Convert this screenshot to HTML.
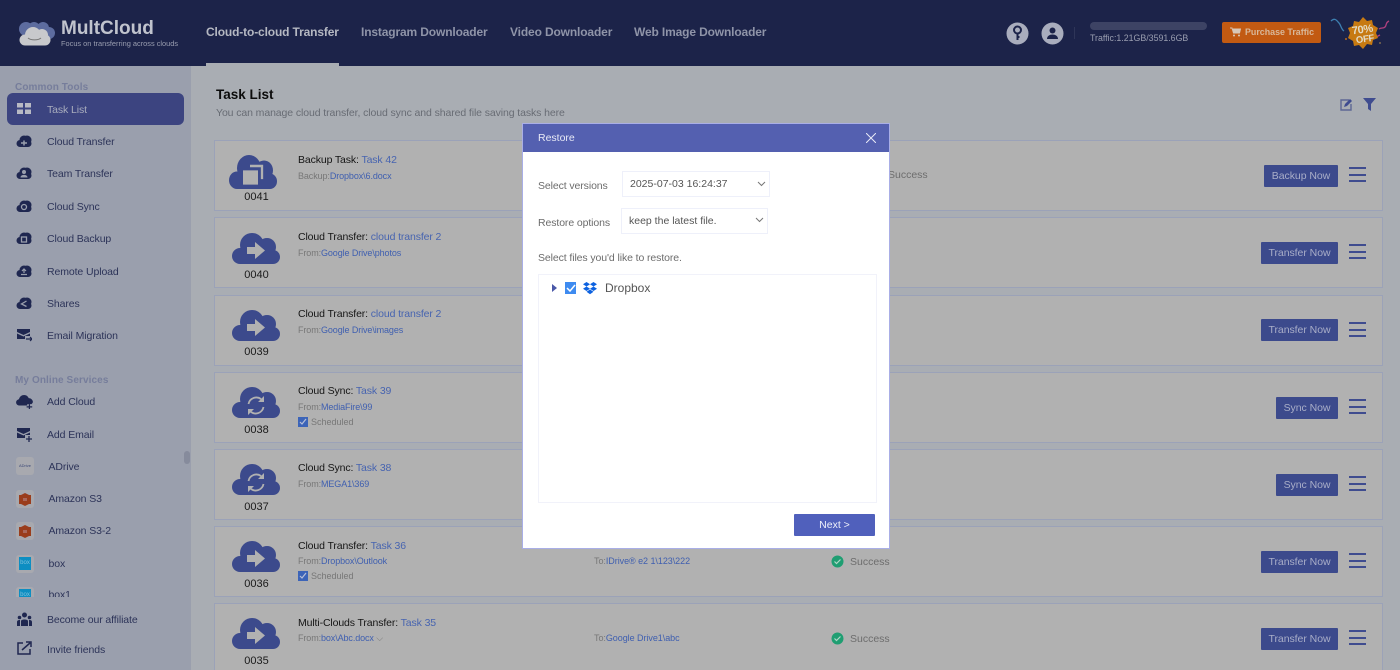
<!DOCTYPE html>
<html><head><meta charset="utf-8"><style>
*{box-sizing:border-box}
html,body{margin:0;padding:0;width:1400px;height:670px;overflow:hidden}
#w{position:relative;width:1400px;height:670px;overflow:hidden;background:#a9adb3;font-family:"Liberation Sans",sans-serif;font-size:10.5px}
.a{position:absolute;white-space:nowrap}
.hd{position:absolute;left:0;top:0;width:1400px;height:66px;background:#1c2349}
.nav{position:absolute;top:25px;font-size:12px;letter-spacing:-.14px;font-weight:bold;color:#8f94a8;white-space:nowrap;line-height:15px}
.side{position:absolute;left:0;top:66px;width:191px;height:604px;background:#9a9fad}
.si{position:absolute;left:47px;font-size:10.5px;letter-spacing:-.1px;color:#2c3358;line-height:14px;white-space:nowrap}
.sec{position:absolute;left:15px;font-size:10px;letter-spacing:.1px;font-weight:bold;color:#767d9b;line-height:12px;white-space:nowrap}
.ic{position:absolute;left:16px}
.lg{position:absolute;left:16px;width:18px;height:18px;background:#a8a9af;border-radius:3px}
.card{position:absolute;left:214px;width:1169px;height:71px;background:#b1b1b1;border:1px solid #9ba2b8}
.t{position:absolute;left:83px;top:12px;font-size:10.5px;letter-spacing:-.12px;color:#151515;white-space:nowrap;line-height:14px}
.t b{font-weight:normal;color:#4764b0}
.s{position:absolute;left:83px;top:29px;font-size:9px;letter-spacing:-.1px;color:#777;white-space:nowrap;line-height:12px}
.s b{font-weight:normal;color:#3f5fb0}
.sch{position:absolute;left:83px;top:43px;font-size:9px;color:#777;line-height:12px;padding-left:13px;white-space:nowrap}
.sch i{position:absolute;left:0;top:1px;width:10px;height:10px;background:#3c64b8}
.n{position:absolute;left:0;width:83px;text-align:center;top:51px;font-size:11px;color:#1a1a1a;line-height:13px}
.cl{position:absolute}
.btn{position:absolute;top:24px;height:22px;background:#3c4a8c;color:#a9aec8;font-size:10.5px;letter-spacing:-.05px;line-height:22px;text-align:center;border-radius:1px}
.ham{position:absolute;left:1134px;top:26px;width:17px;height:15px;border-top:2px solid #3f4c8f;border-bottom:2px solid #3f4c8f}
.ham:after{content:"";position:absolute;left:0;right:0;top:4.500px;height:2px;background:#3f4c8f}
.to{position:absolute;left:379px;top:28px;font-size:9px;letter-spacing:-.05px;color:#777;white-space:nowrap;line-height:12px}
.to b{font-weight:normal;color:#3f5fb0}
.ok{position:absolute;left:616px;top:28px;font-size:10.5px;color:#6d6d6d;padding-left:19px;line-height:14px;white-space:nowrap}
.ok svg{position:absolute;left:0;top:0}
.modal{position:absolute;left:522px;top:123px;width:368px;height:426px;background:#fff;border:1px solid #a9aee6}
.mh{position:absolute;left:0;top:0;width:366px;height:28px;background:#5460b0;color:#e8eaf6;font-size:10.5px;line-height:28px;padding-left:15px}
.sel{position:absolute;height:26px;background:#fff;border:1px solid #eef0fa;font-size:10.5px;color:#555;line-height:24px;padding-left:7px;white-space:nowrap}
.lb{position:absolute;left:15px;font-size:10.5px;letter-spacing:-.1px;color:#6c6c6c;line-height:14px;white-space:nowrap}
</style></head><body><div id="w">
<svg width="0" height="0" style="position:absolute"><defs>
<g id="c"><circle cx="8" cy="23" r="8"/><circle cx="20" cy="12" r="12"/><circle cx="35" cy="14" r="9"/><circle cx="41" cy="24" r="7"/><rect x="8" y="16" width="33" height="15"/></g>
<g id="sc"><circle cx="4" cy="8.500" r="3.500"/><circle cx="8" cy="5" r="4.500"/><circle cx="11" cy="5" r="4.500"/><circle cx="12" cy="8.500" r="3.500"/><rect x="4" y="6" width="8" height="6"/></g>
<g id="arr"><use href="#c" fill="#3c4a8c"/><path d="M15 14h8V9l10 8.500-10 8.500v-5h-8z" fill="#b1b1b1"/></g>
<g id="syn"><use href="#c" fill="#3c4a8c"/><path d="M16.500 17a8 8 0 0 1 12.500-5M31.500 20a8 8 0 0 1-12.500 5" fill="none" stroke="#b1b1b1" stroke-width="1.800"/><path d="M32 9v6h-6zM16 28v-6h6z" fill="#b1b1b1"/></g>
</defs></svg>

<div class="hd"></div>
<svg class="a" style="left:18px;top:21px" width="38" height="25" viewBox="0 0 38 25"><g fill="#5d6c9f"><circle cx="8" cy="8" r="7"/><circle cx="16" cy="7" r="6"/><circle cx="25" cy="7" r="6"/><circle cx="31" cy="12" r="6"/></g><g fill="#c8c9cc"><circle cx="7" cy="19" r="5.500"/><circle cx="15" cy="14" r="8"/><circle cx="24" cy="14" r="6"/><circle cx="27" cy="19" r="5.500"/><rect x="7" y="16" width="20" height="8.500"/></g><path d="M10 17c3 2.500 10 2.500 13 0" stroke="#777" fill="none"/></svg>
<div class="a" style="left:61px;top:19px;font-size:19px;font-weight:bold;color:#c0c3cd;line-height:20px">MultCloud</div>
<div class="a" style="left:61px;top:39px;font-size:7.400px;color:#9a9eb0;line-height:9px">Focus on transferring across clouds</div>
<div class="nav" style="left:206px;color:#b5b8c2">Cloud-to-cloud Transfer</div>
<div class="a" style="left:206px;top:63px;width:133px;height:3px;background:#a9adb3"></div>
<div class="nav" style="left:361px">Instagram Downloader</div>
<div class="nav" style="left:510px">Video Downloader</div>
<div class="nav" style="left:634px">Web Image Downloader</div>

<svg class="a" style="left:1006px;top:22px" width="23" height="23" viewBox="0 0 23 23"><circle cx="11.500" cy="11.500" r="11" fill="#a9adbd"/><circle cx="11.500" cy="8" r="3.500" fill="none" stroke="#1c2349" stroke-width="2"/><path d="M11.500 11v7M11.500 15h2" stroke="#1c2349" stroke-width="2"/></svg>
<svg class="a" style="left:1041px;top:22px" width="23" height="23" viewBox="0 0 23 23"><circle cx="11.500" cy="11.500" r="11" fill="#a9adbd"/><circle cx="11.500" cy="8.500" r="3" fill="#1c2349"/><path d="M6 17c0-6 11-6 11 0z" fill="#1c2349"/></svg>
<div class="a" style="left:1074px;top:27px;width:1px;height:12px;background:#2e3558"></div>
<div class="a" style="left:1090px;top:22px;width:117px;height:8px;background:#3d4364;border-radius:4px"></div>
<div class="a" style="left:1090px;top:32px;font-size:8.800px;color:#9a9eb0;line-height:12px">Traffic:1.21GB/3591.6GB</div>
<div class="a" style="left:1222px;top:22px;width:99px;height:21px;background:#c25a12;border-radius:2px;color:#d8b89a;font-size:8.900px;font-weight:bold;line-height:21px;padding-left:23px">Purchase Traffic</div>
<svg class="a" style="left:1230px;top:27px" width="11" height="10" viewBox="0 0 11 10"><path d="M0 1h2l1.500 5h6l1-4H3" fill="#d8c8b8" stroke="#d8c8b8"/><circle cx="4" cy="8.500" r="1" fill="#d8c8b8"/><circle cx="9" cy="8.500" r="1" fill="#d8c8b8"/></svg>
<svg class="a" style="left:1330px;top:15px" width="62" height="36" viewBox="0 0 62 36"><path d="M1 6c4-4 6 0 8 2s2 6 5 8" stroke="#3d7fb0" fill="none" stroke-width="1.300"/><path d="M49 14c3-2 4 0 6-2s0-4 4-6M46 22l4-2" stroke="#b0407f" fill="none" stroke-width="1.300"/><path d="M33 2l4 4 5-1 1 5 5 3-2 5 2 5-5 2-1 5-5-1-4 5-4-4-5 1-1-5-5-3 2-5-2-5 5-2 1-5 5 1z" fill="#c77a12"/><circle cx="16" cy="24" r="1" fill="#b86b20"/><circle cx="50" cy="28" r="1" fill="#7a6a50"/></svg>
<div class="a" style="left:1352px;top:24px;font-size:11px;font-weight:bold;color:#e3dcc8;line-height:12px;letter-spacing:-.4px;transform:rotate(-8deg)">70%</div>
<div class="a" style="left:1356px;top:34px;font-size:9.500px;font-weight:bold;color:#e3dcc8;line-height:11px;letter-spacing:-.3px;transform:rotate(-8deg)">OFF</div>

<div class="side"></div>
<div class="sec" style="top:82px">Common Tools</div>
<div class="a" style="left:7px;top:93px;width:177px;height:32px;background:#3c4480;border-radius:6px"></div>
<svg class="a" style="left:17px;top:103px" width="14" height="11"><rect width="6" height="4.500" fill="#b8bac4"/><rect x="8" width="6" height="4.500" fill="#b8bac4"/><rect y="6.500" width="6" height="4.500" fill="#b8bac4"/><rect x="8" y="6.500" width="6" height="4.500" fill="#b8bac4"/></svg>
<div class="si" style="top:103px;color:#a9adbd">Task List</div>

<svg class="ic" style="top:135px" width="16" height="12"><use href="#sc" fill="#1f2750"/><path d="M5 8h6M8 5.500v5" stroke="#9a9fad" stroke-width="1.500"/></svg><div class="si" style="top:135px">Cloud Transfer</div>
<svg class="ic" style="top:167px" width="16" height="12"><use href="#sc" fill="#1f2750"/><circle cx="8" cy="5" r="2" fill="#9a9fad"/><path d="M4.500 10.500c0-3.500 7-3.500 7 0z" fill="#9a9fad"/></svg><div class="si" style="top:167px">Team Transfer</div>
<svg class="ic" style="top:200px" width="16" height="12"><use href="#sc" fill="#1f2750"/><circle cx="8" cy="7" r="2.500" fill="none" stroke="#9a9fad" stroke-width="1.300"/></svg><div class="si" style="top:200px">Cloud Sync</div>
<svg class="ic" style="top:232px" width="16" height="12"><use href="#sc" fill="#1f2750"/><rect x="5.500" y="5" width="5" height="5" fill="none" stroke="#9a9fad" stroke-width="1.300"/></svg><div class="si" style="top:232px">Cloud Backup</div>
<svg class="ic" style="top:265px" width="16" height="12"><use href="#sc" fill="#1f2750"/><path d="M5 9.500h6M8 8V4M6 6l2-2 2 2" stroke="#9a9fad" stroke-width="1.200" fill="none"/></svg><div class="si" style="top:265px">Remote Upload</div>
<svg class="ic" style="top:297px" width="16" height="12"><use href="#sc" fill="#1f2750"/><path d="M10.500 4L5.500 7l5 2.500" stroke="#9a9fad" stroke-width="1.300" fill="none"/></svg><div class="si" style="top:297px">Shares</div>
<svg class="ic" style="left:17px;top:329px" width="15" height="13" viewBox="0 0 15 13"><path d="M0 0h13v3L6.500 6 0 3zM0 4.500L6.500 7.500 13 4.500V7H8v3H0z" fill="#1f2750"/><path d="M9 10h6M13 8l2 2-2 2" stroke="#1f2750" stroke-width="1.200" fill="none"/></svg><div class="si" style="top:329px">Email Migration</div>

<div class="sec" style="top:375px">My Online Services</div>
<svg class="ic" style="top:395px" width="17" height="14" viewBox="0 0 24 20"><path d="M5 15C2 15 0 13 0 10.500C0 8 2 6.500 4 6C5 2.500 8 0 11.500 0C14.500 0 17 2 18 4.500C21 4.500 24 7 24 10C24 11 23 12 22 13H16V15Z" fill="#1f2750"/><path d="M15 17h8M19 13v8" stroke="#1f2750" stroke-width="1.800"/></svg><div class="si" style="top:395px">Add Cloud</div>
<svg class="ic" style="left:17px;top:428px" width="15" height="14" viewBox="0 0 15 14"><path d="M0 0h13v3L6.500 6 0 3zM0 4.500L6.500 7.500 13 4.500V7H8v3H0z" fill="#1f2750"/><path d="M9 11h6M12 8v6" stroke="#1f2750" stroke-width="1.300"/></svg><div class="si" style="top:428px">Add Email</div>

<div style="position:absolute;left:0;top:450px;width:191px;height:147px;overflow:hidden">
<div class="lg" style="top:7px"></div><div class="a" style="left:19px;top:13px;font-size:4px;color:#3d4a78;line-height:6px">ADrive</div><div class="si" style="left:48.500px;top:10px">ADrive</div>
<div class="lg" style="top:40px"></div><svg class="a" style="left:19px;top:43px" width="12" height="13" viewBox="0 0 12 13"><path d="M2 2l4-2 4 2 2 0v9l-2 0-4 2-4-2-2 0V2z" fill="#9a3d1c"/><path d="M4 5h4v3H4z" fill="#a9695c"/></svg><div class="si" style="left:48.500px;top:42px">Amazon S3</div>
<div class="lg" style="top:72px"></div><svg class="a" style="left:19px;top:75px" width="12" height="13" viewBox="0 0 12 13"><path d="M2 2l4-2 4 2 2 0v9l-2 0-4 2-4-2-2 0V2z" fill="#9a3d1c"/><path d="M4 5h4v3H4z" fill="#a9695c"/></svg><div class="si" style="left:48.500px;top:74px">Amazon S3-2</div>
<div class="lg" style="top:105px"></div><div class="a" style="left:19px;top:107px;width:12px;height:13px;background:#0d8ec2;color:#7fc0dc;font-size:6px;line-height:13px;text-align:center">box</div><div class="si" style="left:48.500px;top:107px">box</div>
<div class="lg" style="top:137px"></div><div class="a" style="left:19px;top:139px;width:12px;height:13px;background:#0d8ec2;color:#7fc0dc;font-size:6px;line-height:13px;text-align:center">box</div><div class="si" style="left:48.500px;top:138px">box1</div>
</div>
<div class="a" style="left:184px;top:451px;width:6px;height:13px;background:#868b9c;border-radius:3px"></div>

<svg class="ic" style="left:17px;top:612px" width="15" height="14" viewBox="0 0 15 14"><circle cx="7.500" cy="3" r="2.500" fill="#1f2750"/><circle cx="2.500" cy="5.500" r="1.800" fill="#1f2750"/><circle cx="12.500" cy="5.500" r="1.800" fill="#1f2750"/><path d="M4 14V9c0-2 7-2 7 0v5zM0 14V10c0-2 2-2 3-2v6zM15 14V10c0-2-2-2-3-2v6z" fill="#1f2750"/></svg><div class="si" style="top:613px">Become our affiliate</div>
<svg class="ic" style="left:17px;top:641px" width="15" height="14" viewBox="0 0 15 14"><path d="M6 2H1v11h12V8" fill="none" stroke="#1f2750" stroke-width="1.500"/><path d="M5 9L13 2M9 1h5v5" fill="none" stroke="#1f2750" stroke-width="1.500"/></svg><div class="si" style="top:643px">Invite friends</div>

<div class="a" style="left:216px;top:87px;font-size:13.500px;font-weight:bold;color:#0c0c0c;line-height:16px">Task List</div>
<div class="a" style="left:216px;top:106px;font-size:10.500px;letter-spacing:-.1px;color:#686c74;line-height:14px">You can manage cloud transfer, cloud sync and shared file saving tasks here</div>
<svg class="a" style="left:1340px;top:98px" width="13" height="13" viewBox="0 0 13 13"><path d="M9 2H1v10h10V6" fill="none" stroke="#5d6794" stroke-width="1.400"/><path d="M4 9l1-3 5-5 2 2-5 5z" fill="#3f4c8f"/></svg>
<svg class="a" style="left:1363px;top:98px" width="14" height="13" viewBox="0 0 14 13"><path d="M0 0h13L8 6v7L5 11V6z" fill="#3f4c8f"/></svg>

<div class="card" style="top:140px"><svg class="cl" style="left:14px;top:14px" width="48" height="34" viewBox="0 0 48 31" preserveAspectRatio="none"><use href="#c" fill="#3c4a8c"/><rect x="14" y="14" width="15" height="13" fill="#b1b1b1"/><path d="M21 10h12v12" fill="none" stroke="#b1b1b1" stroke-width="2.300"/></svg><div class="n" style="top:50px">0041</div><div class="t">Backup Task: <b>Task 42</b></div><div class="s">Backup:<b>Dropbox\6.docx</b></div><div class="a" style="left:673px;top:27px;font-size:10.500px;color:#6d6d6d;line-height:14px">Success</div><div class="btn" style="left:1049px;width:74px">Backup Now</div><div class="ham"></div></div>

<div class="card" style="top:217px"><svg class="cl" style="left:17px;top:15px" width="48" height="31" viewBox="0 0 48 31"><use href="#arr"/></svg><div class="n">0040</div><div class="t">Cloud Transfer: <b>cloud transfer 2</b></div><div class="s">From:<b>Google Drive\photos</b></div><div class="btn" style="left:1046px;width:77px">Transfer Now</div><div class="ham"></div></div>

<div class="card" style="top:295px"><svg class="cl" style="left:17px;top:14px" width="48" height="31" viewBox="0 0 48 31"><use href="#arr"/></svg><div class="n" style="top:50px">0039</div><div class="t" style="top:11px">Cloud Transfer: <b>cloud transfer 2</b></div><div class="s" style="top:28px">From:<b>Google Drive\images</b></div><div class="btn" style="left:1046px;width:77px;top:23px">Transfer Now</div><div class="ham"></div></div>

<div class="card" style="top:372px"><svg class="cl" style="left:17px;top:14px" width="48" height="31" viewBox="0 0 48 31"><use href="#syn"/></svg><div class="n">0038</div><div class="t" style="top:11px">Cloud Sync: <b>Task 39</b></div><div class="s" style="top:28px">From:<b>MediaFire\99</b></div><div class="sch"><i></i>Scheduled<svg class="a" style="left:1px;top:2px" width="8" height="8"><path d="M1 4l2 2 4-5" stroke="#b8c0d8" stroke-width="1.200" fill="none"/></svg></div><div class="btn" style="left:1061px;width:62px">Sync Now</div><div class="ham"></div></div>

<div class="card" style="top:449px"><svg class="cl" style="left:17px;top:14px" width="48" height="31" viewBox="0 0 48 31"><use href="#syn"/></svg><div class="n">0037</div><div class="t" style="top:11px">Cloud Sync: <b>Task 38</b></div><div class="s" style="top:28px">From:<b>MEGA1\369</b></div><div class="btn" style="left:1061px;width:62px">Sync Now</div><div class="ham"></div></div>

<div class="card" style="top:526px"><svg class="cl" style="left:17px;top:14px" width="48" height="31" viewBox="0 0 48 31"><use href="#arr"/></svg><div class="n">0036</div><div class="t">Cloud Transfer: <b>Task 36</b></div><div class="s" style="top:28px">From:<b>Dropbox\Outlook</b></div><div class="sch"><i></i>Scheduled<svg class="a" style="left:1px;top:2px" width="8" height="8"><path d="M1 4l2 2 4-5" stroke="#b8c0d8" stroke-width="1.200" fill="none"/></svg></div><div class="to">To:<b>IDrive® e2 1\123\222</b></div><div class="ok"><svg width="13" height="13"><circle cx="6.500" cy="6.500" r="6" fill="#1f9e72"/><path d="M3.500 6.500l2 2 4-4" stroke="#b0d8c8" stroke-width="1.200" fill="none"/></svg>Success</div><div class="btn" style="left:1046px;width:77px">Transfer Now</div><div class="ham"></div></div>

<div class="card" style="top:603px"><svg class="cl" style="left:17px;top:14px" width="48" height="31" viewBox="0 0 48 31"><use href="#arr"/></svg><div class="n">0035</div><div class="t">Multi-Clouds Transfer: <b>Task 35</b></div><div class="s" style="top:28px">From:<b>box\Abc.docx</b> ⌵</div><div class="to">To:<b>Google Drive1\abc</b></div><div class="ok"><svg width="13" height="13"><circle cx="6.500" cy="6.500" r="6" fill="#1f9e72"/><path d="M3.500 6.500l2 2 4-4" stroke="#b0d8c8" stroke-width="1.200" fill="none"/></svg>Success</div><div class="btn" style="left:1046px;width:77px">Transfer Now</div><div class="ham"></div></div>

<div class="modal">
<div class="mh">Restore</div>
<svg class="a" style="left:343px;top:9px" width="10" height="10"><path d="M0 0l10 10M10 0L0 10" stroke="#e8eaf6"/></svg>
<div class="lb" style="top:55px">Select versions</div>
<div class="sel" style="left:99px;top:47px;width:148px">2025-07-03 16:24:37</div>
<svg class="a" style="left:234px;top:57px" width="9" height="6"><path d="M1 1l3.500 3.500L8 1" stroke="#777" fill="none"/></svg>
<div class="lb" style="top:92px">Restore options</div>
<div class="sel" style="left:98px;top:84px;width:147px">keep the latest file.</div>
<svg class="a" style="left:232px;top:93px" width="9" height="6"><path d="M1 1l3.500 3.500L8 1" stroke="#777" fill="none"/></svg>
<div class="lb" style="top:127px">Select files you'd like to restore.</div>
<div class="a" style="left:15px;top:150px;width:339px;height:229px;border:1px solid #f1f2fa"></div>
<svg class="a" style="left:29px;top:160px" width="6" height="8"><path d="M0 0l5 4-5 4z" fill="#4a58a8"/></svg>
<div class="a" style="left:42px;top:158px;width:11px;height:12px;background:#3e8bf0"></div>
<svg class="a" style="left:43px;top:160px" width="10" height="8"><path d="M1 4l3 3 5-6" stroke="#fff" stroke-width="1.500" fill="none"/></svg>
<svg class="a" style="left:60px;top:158px" width="14" height="13" viewBox="0 0 14 13"><path d="M3.500 0L0 2.300l3.500 2.200L7 2.300zM10.500 0L7 2.300l3.500 2.200L14 2.300zM0 6.800L3.500 9 7 6.800 3.500 4.500zM10.500 4.500L7 6.800 10.500 9 14 6.800zM3.500 9.800L7 12.200l3.500-2.400L7 7.500z" fill="#0d62e0"/></svg>
<div class="a" style="left:82px;top:157px;font-size:12px;color:#555;line-height:15px">Dropbox</div>
<div class="a" style="left:271px;top:390px;width:81px;height:22px;background:#5060bc;color:#eef0fa;font-size:10.500px;line-height:22px;text-align:center;border-radius:1px">Next &gt;</div>
</div>
</div></body></html>
